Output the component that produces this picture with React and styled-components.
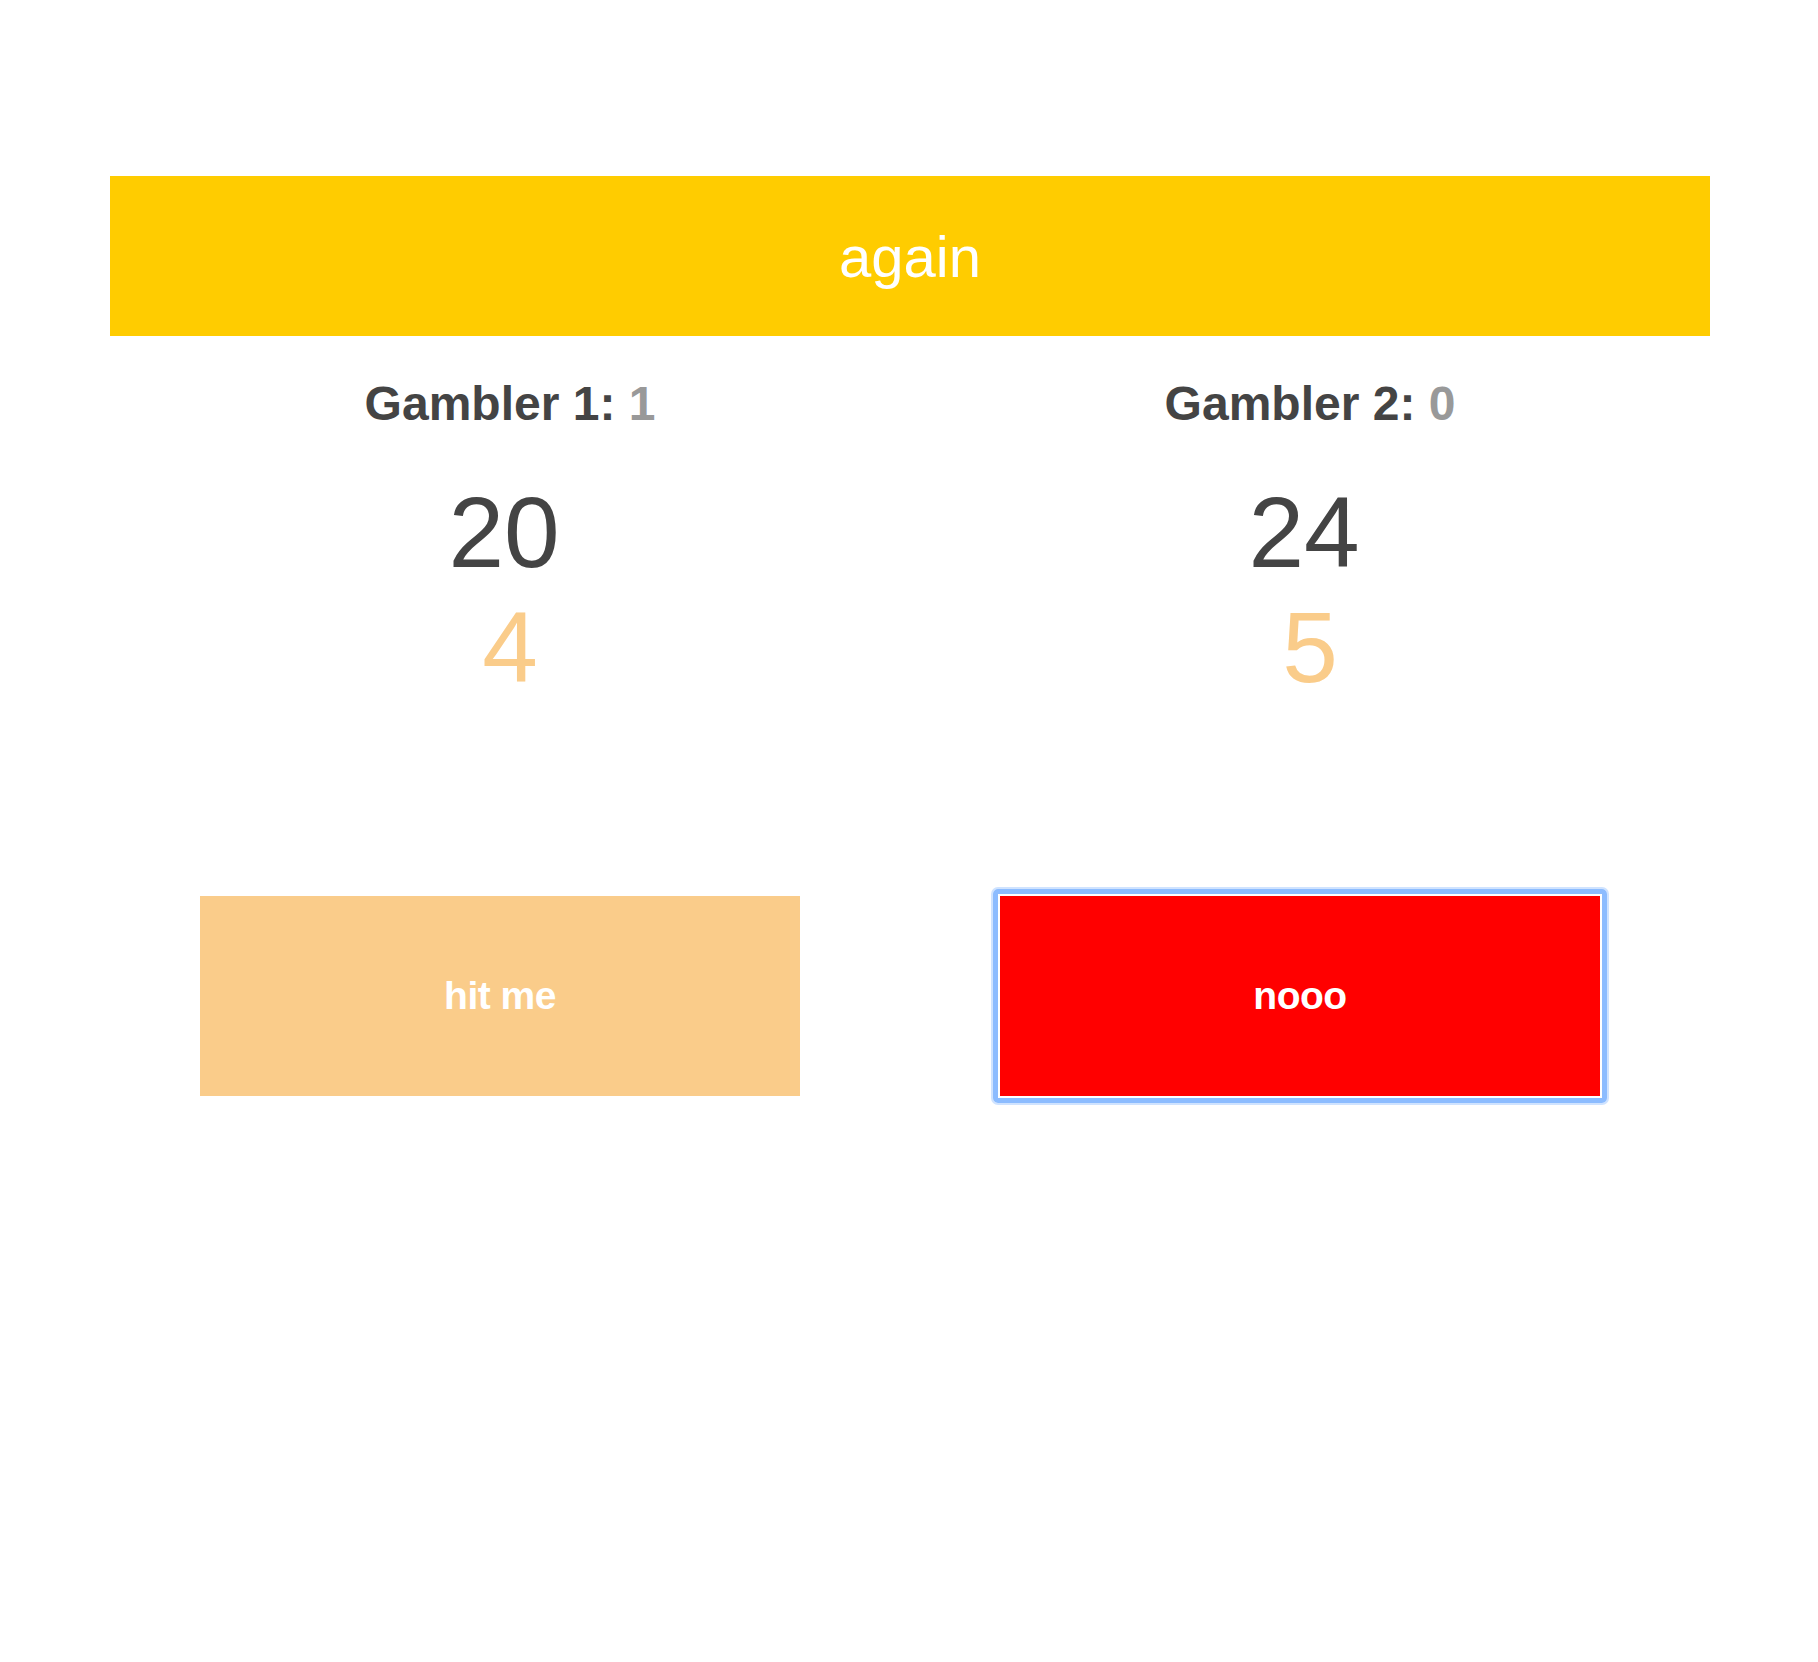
import styled, { createGlobalStyle } from "styled-components";

const GlobalStyle = createGlobalStyle`
  html, body {
    margin: 0;
    padding: 0;
    background: #fff;
  }
  body {
    font-family: "Liberation Sans", Arial, Helvetica, sans-serif;
  }
`;

const gamblers = [
  { name: "Gambler 1", score: 1, total: 20, card: 4 },
  { name: "Gambler 2", score: 0, total: 24, card: 5 },
];

const App = () => {
  return (
    <>
      <GlobalStyle />
      <Page>
        <AgainBar>again</AgainBar>
        <Players>
          {gamblers.map((g) => (
            <Player key={g.name}>
              <PlayerName>
                {g.name}: <Score>{g.score}</Score>
              </PlayerName>
              <Total>{g.total}</Total>
              <Card>{g.card}</Card>
            </Player>
          ))}
        </Players>
        <Actions>
          <ActionCell>
            <ActionButton $bg="#facc8a">hit me</ActionButton>
          </ActionCell>
          <ActionCell>
            <ActionButton $bg="#ff0000" $focused>
              nooo
            </ActionButton>
          </ActionCell>
        </Actions>
      </Page>
    </>
  );
};

const Page = styled.div`
  width: 1600px;
  margin-left: 110px;
  padding-top: 176px;
  min-height: 1662px;
  box-sizing: border-box;
`;

const AgainBar = styled.div`
  height: 160px;
  background: #ffcc00;
  color: #fff;
  font-size: 58px;
  display: flex;
  align-items: center;
  justify-content: center;
`;

const Players = styled.div`
  display: grid;
  grid-template-columns: 1fr 1fr;
  padding-top: 40px;
`;

const Player = styled.div`
  display: flex;
  flex-direction: column;
  align-items: center;
`;

const PlayerName = styled.div`
  font-size: 48px;
  line-height: 56px;
  font-weight: bold;
  color: #444;
  margin-bottom: 43px;
`;

const Score = styled.span`
  color: #999;
`;

const Total = styled.div`
  font-size: 100px;
  line-height: 115px;
  color: #444;
  padding-right: 12px;
`;

const Card = styled.div`
  font-size: 100px;
  line-height: 115px;
  color: #facc8a;
`;

const Actions = styled.div`
  display: grid;
  grid-template-columns: 1fr 1fr;
  margin-left: -10px;
  margin-right: 10px;
  padding-top: 191px;
`;

const ActionCell = styled.div`
  display: flex;
  justify-content: center;
`;

const ActionButton = styled.button`
  position: relative;
  width: 600px;
  height: 200px;
  border: none;
  padding: 0;
  background: ${(p) => p.$bg};
  color: #fff;
  font-family: "Liberation Sans", Arial, Helvetica, sans-serif;
  font-size: 39px;
  font-weight: bold;
  letter-spacing: -0.5px;
  cursor: pointer;

  &::before {
    content: "";
    display: ${(p) => (p.$focused ? "block" : "none")};
    position: absolute;
    inset: -7px;
    border: 5px solid #8cbcff;
    border-radius: 5px;
    box-shadow: 0 0 0 2px #cfe3ff;
    pointer-events: none;
  }
`;

export default App;
